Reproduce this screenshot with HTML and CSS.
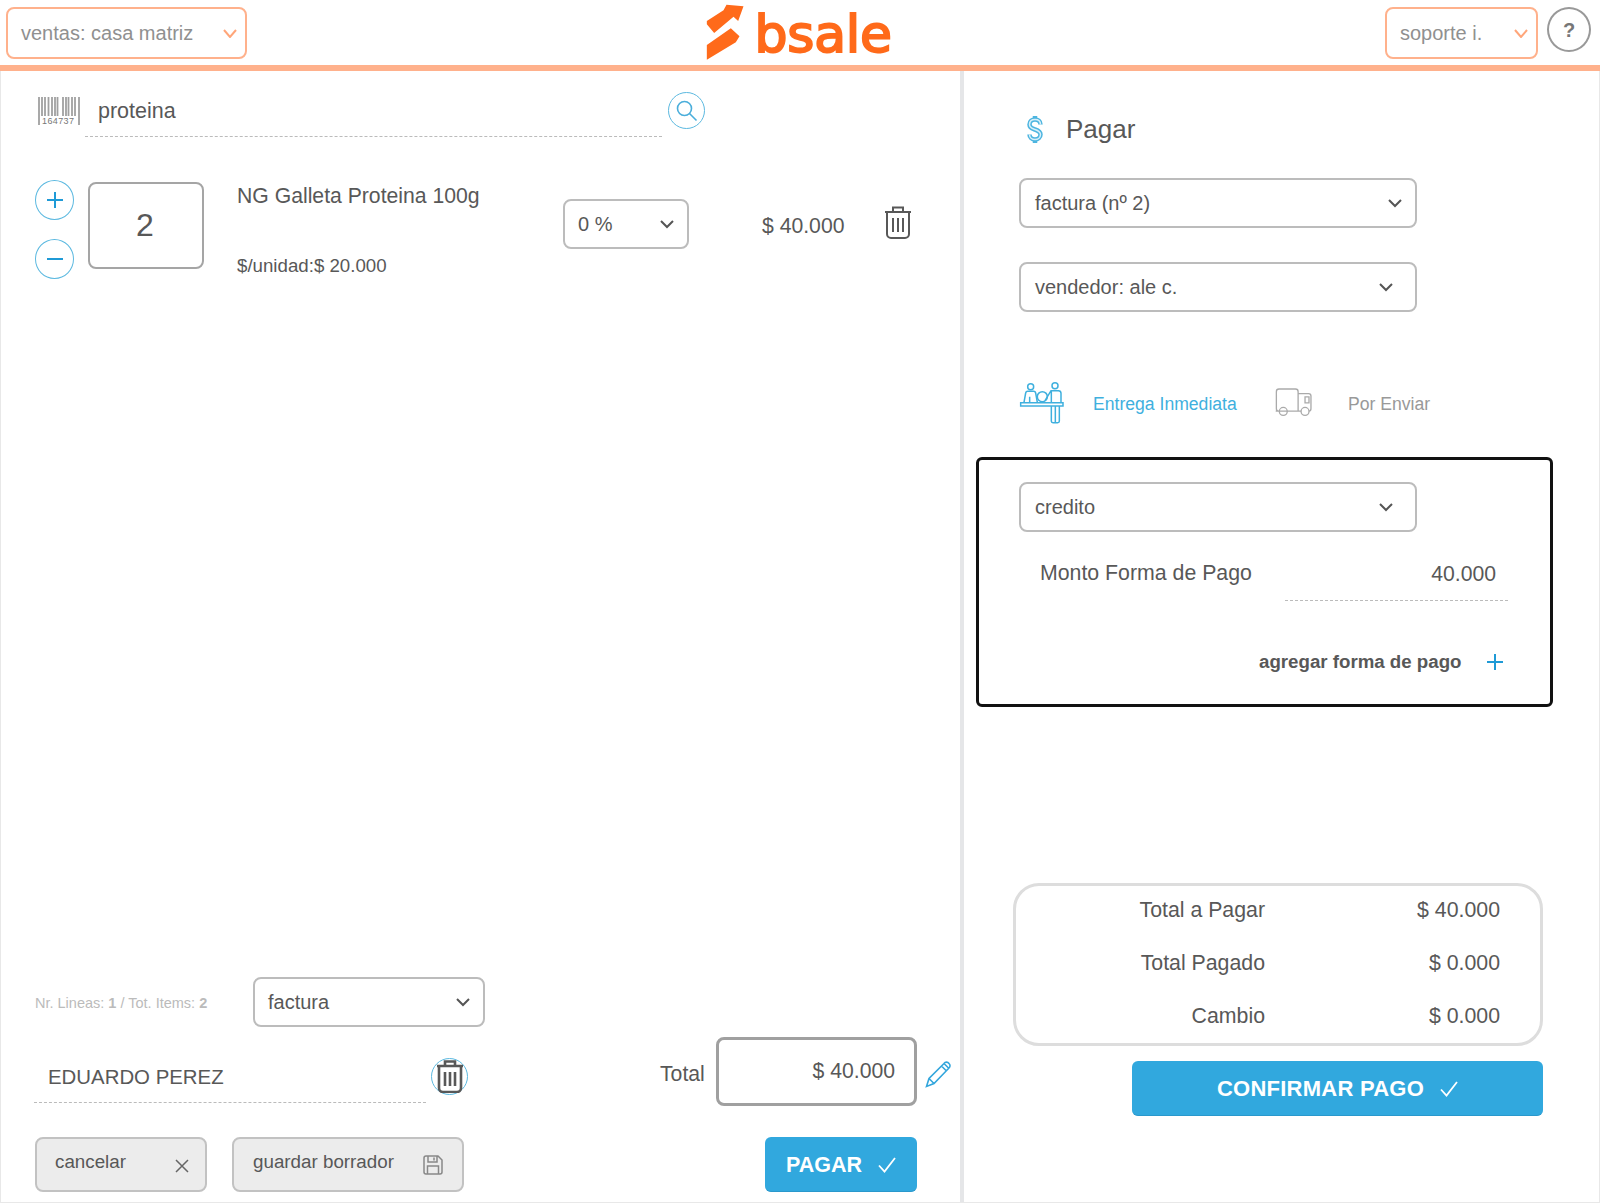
FILE: index.html
```html
<!DOCTYPE html>
<html lang="es">
<head>
<meta charset="utf-8">
<title>bsale</title>
<link rel="stylesheet" href="styles.css">
</head>
<body>
<div class="app">
  <header class="topbar">
    <div class="topbar-left">
      <div class="select select-top w-branch"><span>ventas: casa matriz</span>
        <svg class="chev" viewBox="0 0 14 9"><path d="M1 1l6 7 6-7"/></svg></div>
    </div>
    <div class="logo">
      <svg class="logo-mark" viewBox="70 5 125 180"><path d="M78 62L128 30 137 13 188 18 172 62 158 49 100 98 78 72ZM78 178V134L150 84 176 108 165 126Z"/></svg>
      <span class="logo-text">bsale</span>
    </div>
    <div class="topbar-right">
      <div class="select select-top w-user"><span>soporte i.</span>
        <svg class="chev" viewBox="0 0 14 9"><path d="M1 1l6 7 6-7"/></svg></div>
      <div class="help">?</div>
    </div>
  </header>

  <main class="main">
    <section class="sale">
      <div class="sale-top">
        <div class="search">
          <svg class="barcode" viewBox="0 0 42 28">
            <path d="M1 0v28M4 0v19M7 0v19M10.500 0v19M14 0v19M17 0v19M19.500 0v19M25 0v19M28 0v19M30.500 0v19M34 0v19M37 0v19M41 0v28"/>
            <text x="4" y="26.500">164737</text>
          </svg>
          <div class="search-field">proteina</div>
          <button class="search-btn">
            <svg viewBox="0 0 24 24"><circle cx="9.500" cy="9.500" r="7"/><path d="M14.500 14.500l7 7"/></svg>
          </button>
        </div>
        <div class="item">
          <div class="stepper">
            <div class="round"><svg viewBox="0 0 18 18"><path d="M9 1v16M1 9h16"/></svg></div>
            <div class="round"><svg viewBox="0 0 18 18"><path d="M1 9h16"/></svg></div>
          </div>
          <div class="qty">2</div>
          <div class="item-info">
            <div class="item-name">NG Galleta Proteina 100g</div>
            <div class="item-unit">$/unidad:$ 20.000</div>
          </div>
          <div class="select w-disc"><span>0 %</span>
            <svg class="chev" viewBox="0 0 14 9"><path d="M1 1l6 6 6-6"/></svg></div>
          <div class="item-price">$ 40.000</div>
          <svg class="trash" viewBox="0 0 28 33"><path d="M1 6h26M9 6V1.500h10V6M3 6v22a4 4 0 0 0 4 4h14a4 4 0 0 0 4-4V6M9 12v14M14 12v14M19 12v14"/></svg>
        </div>
      </div>

      <div class="sale-bottom">
        <div class="doc-row">
          <div class="counts">Nr. Lineas: <b>1</b> / Tot. Items: <b>2</b></div>
          <div class="select w-doc"><span>factura</span>
            <svg class="chev" viewBox="0 0 14 9"><path d="M1 1l6 6 6-6"/></svg></div>
        </div>
        <div class="total-row">
          <div class="customer">EDUARDO PEREZ</div>
          <div class="customer-del">
            <svg viewBox="0 0 28 33"><path d="M1 6h26M9 6V1.500h10V6M3 6v22a4 4 0 0 0 4 4h14a4 4 0 0 0 4-4V6M9 12v14M14 12v14M19 12v14"/></svg>
          </div>
          <div class="total-label">Total</div>
          <div class="total-box">$ 40.000</div>
          <svg class="pencil" viewBox="0 0 27 28"><path d="M1.500 26.500l2.500-8L19 3.500a3 3 0 0 1 5 0 3 3 0 0 1 0 4.500L9 23.500ZM4 18.500l5 5M16.500 6l5 5M19 3.500l5 5"/></svg>
        </div>
        <div class="action-row">
          <button class="btn-grey w-cancel"><span>cancelar</span>
            <svg class="icon-x" viewBox="0 0 14 14"><path d="M1 1l12 12M13 1L1 13"/></svg></button>
          <button class="btn-grey w-draft"><span>guardar borrador</span>
            <svg class="icon-save" viewBox="0 0 20 20"><path d="M1 3a2 2 0 0 1 2-2h12l4 4v12a2 2 0 0 1-2 2H3a2 2 0 0 1-2-2ZM5 1v6h9V1M11 2.500v3M4.500 19v-8h11v8"/></svg></button>
          <button class="btn-blue w-pay"><span>PAGAR</span>
            <svg class="icon-check" viewBox="0 0 18 16"><path d="M1 8.500l5.500 6L17 1"/></svg></button>
        </div>
      </div>
    </section>

    <section class="pay">
      <div class="pay-title">
        <svg class="dollar" viewBox="0 0 20 29"><path class="d-out" d="M15.500 9.500C15.500 6 13 4.500 10 4.500S4.500 6 4.500 9.500 7 13.500 10 14.500s5.500 2 5.500 5-2.500 5-5.500 5-5.500-2-5.500-5M10 1v3.500M10 24.500V28"/><path class="d-in" d="M15.500 9.500C15.500 6 13 4.500 10 4.500S4.500 6 4.500 9.500 7 13.500 10 14.500s5.500 2 5.500 5-2.500 5-5.500 5-5.500-2-5.500-5"/></svg>
        <h2>Pagar</h2>
      </div>
      <div class="select w-pay-sel pr-near"><span>factura (nº 2)</span>
        <svg class="chev" viewBox="0 0 14 9"><path d="M1 1l6 6 6-6"/></svg></div>
      <div class="select w-pay-sel pr-far mt-seller"><span>vendedor: ale c.</span>
        <svg class="chev" viewBox="0 0 14 9"><path d="M1 1l6 6 6-6"/></svg></div>

      <div class="delivery">
        <svg class="ico-counter" viewBox="30 30 135 135">
          <circle cx="65" cy="50" r="9"/><circle cx="138" cy="47" r="9"/><circle cx="100" cy="80" r="15"/>
          <path d="M45 97l5-28q1-5 6-5h18q5 0 6 5l5 28M62 80v17M108 92l18-30h22q8 0 8 8v28M35 98h127v10H35ZM127 108v46q0 4 5 4h14q5 0 5-4v-46M139 108v50M127 62v36"/>
        </svg>
        <span class="del-on">Entrega Inmediata</span>
        <svg class="ico-truck" viewBox="795 55 112 88">
          <path d="M808 125h-2q-7 0-7-8V66q0-8 8-8h50q8 0 8 8v59h-68M832 125h42M865 72h32q7 0 7 7v38q0 8-6 8"/>
          <path d="M886 82h12v18h-12Z"/>
          <circle cx="820" cy="126" r="12"/><circle cx="886" cy="126" r="12"/>
        </svg>
        <span class="del-off">Por Enviar</span>
      </div>

      <div class="method">
        <div class="select w-pay-sel pr-far"><span>credito</span>
          <svg class="chev" viewBox="0 0 14 9"><path d="M1 1l6 6 6-6"/></svg></div>
        <div class="amount-row">
          <div class="amount-label">Monto Forma de Pago</div>
          <div class="amount-field">40.000</div>
        </div>
        <div class="add-row">
          <b>agregar forma de pago</b>
          <svg class="add-plus" viewBox="0 0 16 16"><path d="M8 0v16M0 8h16"/></svg>
        </div>
      </div>

      <div class="summary">
        <div class="sum-label">Total a Pagar</div><div class="sum-value">$ 40.000</div>
        <div class="sum-label">Total Pagado</div><div class="sum-value">$ 0.000</div>
        <div class="sum-label">Cambio</div><div class="sum-value">$ 0.000</div>
      </div>
      <button class="btn-blue w-confirm"><span>CONFIRMAR PAGO</span>
        <svg class="icon-check" viewBox="0 0 18 16"><path d="M1 8.500l5.500 6L17 1"/></svg></button>
    </section>
  </main>
</div>
</body>
</html>
```
FILE: styles.css
```css
* { box-sizing: border-box; }
html, body { margin: 0; padding: 0; background: #fff; }
body { font-family: "Liberation Sans", Arial, sans-serif; color: #585858; font-size: 21.2px; }
svg { display: block; flex: none; fill: none; }
button { font-family: inherit; margin: 0; cursor: pointer; }

.app { width: 1600px; height: 1203px; overflow: hidden; }

/* top bar */
.topbar { height: 71px; border-bottom: 6px solid #ffb18c; padding: 7px 9px 0 6px; display: grid; grid-template-columns: 1fr auto 1fr; }
.topbar-right { display: flex; justify-content: flex-end; gap: 9px; }
.logo { display: flex; align-items: flex-start; width: 188px; height: 58px; margin-left: -2px; }
.logo-mark { width: 42px; height: 60px; margin-top: -5px; fill: #ff6a1a; }
.logo-text { font-family: "DejaVu Sans", sans-serif; font-size: 52px; line-height: 58px; letter-spacing: -.2px; color: #ff6a1a; margin: -2px 0 0 9px; -webkit-text-stroke: 2px #ff6a1a; }
.help { width: 44px; height: 45px; border: 2px solid #999; border-radius: 50%; display: flex; align-items: center; justify-content: center; padding-top: 2px; font-weight: 700; font-size: 20px; color: #777; }

/* select */
.select { height: 50px; border: 2px solid #bcbcbc; border-radius: 8px; background: #fff; display: flex; align-items: center; justify-content: space-between; padding: 0 13px 0 13px; font-size: 20px; line-height: 24px; flex: none; }
.chev { width: 14px; height: 9px; }
.chev path { stroke: #555; stroke-width: 2; }
.select-top { height: 52px; border: 2px solid #ffb18c; padding: 0 8px 0 13px; font-size: 20px; color: #909090; }
.select-top .chev path { stroke: #ffa67a; }
.w-branch { width: 241px; }
.w-user { width: 153px; }
.w-disc { width: 126px; margin-top: 19px; }
.w-doc { width: 232px; }
.w-pay-sel { width: 398px; padding-left: 14px; }
.pr-far { padding-right: 22px; }
.mt-seller { margin-top: 34px; }

/* main */
.main { height: 1132px; display: grid; grid-template-columns: 963px 1fr; border: 1px solid #e8e8e8; border-top: 0; }
.sale { border-right: 4px solid #e5e6e8; padding: 0 0 10px 34px; display: flex; flex-direction: column; justify-content: space-between; }
.search { display: flex; align-items: flex-start; margin-top: 21px; }
.barcode { width: 42px; height: 28px; margin: 5px 5px 0 3px; }
.barcode path { stroke: #a0a0a0; stroke-width: 1.8; }
.barcode text { font-family: "Liberation Sans", sans-serif; font-size: 9px; letter-spacing: .4px; fill: #777; }
.search-field { width: 577px; height: 45px; border-bottom: 1px dashed #bbb; padding: 7px 0 0 13px; font-size: 21.5px; line-height: 24px; }
.search-btn { width: 37px; height: 37px; margin-left: 6px; padding: 0; border: 1.5px solid #5cb9e0; border-radius: 50%; background: #fff; display: flex; align-items: center; justify-content: center; }
.search-btn svg { width: 24px; height: 24px; }
.search-btn path, .search-btn circle { stroke: #4aaedb; stroke-width: 1.6; }

.item { display: flex; align-items: flex-start; margin-top: 43px; }
.stepper { display: flex; flex-direction: column; gap: 19px; }
.round { width: 39px; height: 40px; border: 1.5px solid #5cb9e0; border-radius: 50%; display: flex; align-items: center; justify-content: center; }
.round svg { width: 18px; height: 18px; }
.round path { stroke: #1f9ad6; stroke-width: 2; }
.qty { width: 116px; height: 87px; margin: 2px 0 0 14px; border: 2px solid #a5a5a5; border-radius: 8px; display: flex; align-items: center; justify-content: center; padding-right: 2px; font-size: 32px; }
.item-info { width: 326px; margin: 4px 0 0 33px; line-height: 24px; }
.item-unit { font-size: 18.7px; margin-top: 46px; }
.item-price { margin: 34px 0 0 73px; line-height: 24px; white-space: nowrap; width: 83px; }
.trash { width: 28px; height: 33px; margin: 26px 0 0 39px; }
.trash path { stroke: #585858; stroke-width: 2; }

.doc-row { display: flex; align-items: center; }
.counts { width: 218px; padding-top: 1px; font-size: 14.5px; color: #bbb; line-height: 18px; white-space: nowrap; }
.total-row { display: flex; align-items: flex-start; height: 69px; margin-top: 10px; }
.customer { width: 392px; height: 48px; margin: 18px 0 0 -1px; border-bottom: 1px dashed #bbb; padding-left: 14px; font-size: 20.4px; line-height: 44px; }
.customer-del { width: 37px; height: 37px; margin: 21px 0 0 5px; border: 1.5px solid #5cb9e0; border-radius: 50%; display: flex; align-items: center; justify-content: center; }
.customer-del svg { width: 28px; height: 33px; }
.customer-del path { stroke: #585858; stroke-width: 2.6; }
.total-label { width: 45px; margin: 25px 11px 0 192px; line-height: 24px; white-space: nowrap; }
.total-box { width: 201px; height: 69px; border: 3px solid #a0a0a0; border-radius: 8px; padding: 19px 19px 0 0; line-height: 24px; text-align: right; }
.pencil { width: 27px; height: 28px; margin: 23px 0 0 8px; }
.pencil path { stroke: #33a6dc; stroke-width: 1.6; }

.action-row { display: flex; align-items: stretch; height: 55px; margin-top: 31px; }
.btn-grey { height: 55px; border: 2px solid #c2c2c2; border-radius: 8px; background: #ececec; color: #585858; font-size: 18.8px; display: flex; align-items: center; justify-content: space-between; padding: 0 19px 5px 18px; }
.w-cancel { width: 172px; padding-right: 16px; }
.w-draft { width: 232px; margin-left: 25px; padding-left: 19px; }
.icon-x { width: 14px; height: 14px; margin-top: 7px; }
.icon-x path { stroke: #666; stroke-width: 1.5; }
.icon-save { width: 20px; height: 20px; margin-top: 6px; }
.icon-save path { stroke: #888; stroke-width: 1.5; }
.btn-blue { height: 55px; border: 0; border-bottom: 1px solid #2a98cc; border-radius: 6px; background: #31a8de; color: #fff; font-weight: 700; font-size: 21.5px; display: flex; align-items: center; justify-content: center; gap: 16px; padding: 2px 0 0; }
.icon-check { width: 18px; height: 16px; }
.icon-check path { stroke: #fff; stroke-width: 1.8; }
.w-pay { width: 152px; margin-left: 301px; }

/* payment column */
.pay { padding-left: 55px; }
.pay-title { display: flex; align-items: center; height: 32px; margin-top: 42px; padding-left: 6px; }
.dollar { width: 20px; height: 29px; }
.d-out { stroke: #4db5e0; stroke-width: 4.5; }
.d-in { stroke: #d8eff9; stroke-width: 1.5; }
.pay-title h2 { margin: 0 0 0 21px; font-size: 26px; font-weight: 400; line-height: 32px; }
.pay-title + .select { margin-top: 33px; }
.delivery { display: flex; align-items: center; height: 45px; margin-top: 68px; font-size: 17.6px; }
.ico-counter { width: 45px; height: 45px; }
.ico-counter path, .ico-counter circle { stroke: #3fb0de; stroke-width: 4.5; }
.del-on { margin: 4px 0 0 29px; color: #3fb0de; white-space: nowrap; width: 144px; }
.ico-truck { width: 37px; height: 29px; margin: 0 36px 0 38px; }
.ico-truck path, .ico-truck circle { stroke: #aaa; stroke-width: 4; }
.del-off { margin-top: 4px; color: #999; }

.method { width: 577px; height: 250px; margin: 32px 0 0 -43px; border: 3px solid #111; border-radius: 6px; padding: 22px 0 0 40px; }
.amount-row { display: flex; align-items: flex-start; padding-top: 29px; }
.amount-label { width: 245px; margin-left: 21px; font-size: 21.3px; line-height: 24px; }
.amount-field { width: 223px; height: 40px; padding: 1px 12px 0 0; border-bottom: 1px dashed #bbb; text-align: right; line-height: 24px; }
.add-row { display: flex; align-items: center; margin: 49px 0 0 240px; font-size: 18.7px; line-height: 24px; }
.add-plus { width: 16px; height: 16px; margin-left: 25px; }
.add-plus path { stroke: #1f9ad6; stroke-width: 2; }

.summary { width: 530px; height: 163px; margin: 176px 0 0 -6px; border: 3px solid #ddd; border-radius: 26px; padding-top: 12px; display: grid; grid-template-columns: 249px 235px; grid-auto-rows: 24px; row-gap: 29px; font-size: 21.3px; line-height: 24px; }
.sum-label, .sum-value { text-align: right; }
.w-confirm { width: 411px; margin: 15px 0 0 113px; gap: 16px; font-size: 22px; letter-spacing: .25px; }
```
